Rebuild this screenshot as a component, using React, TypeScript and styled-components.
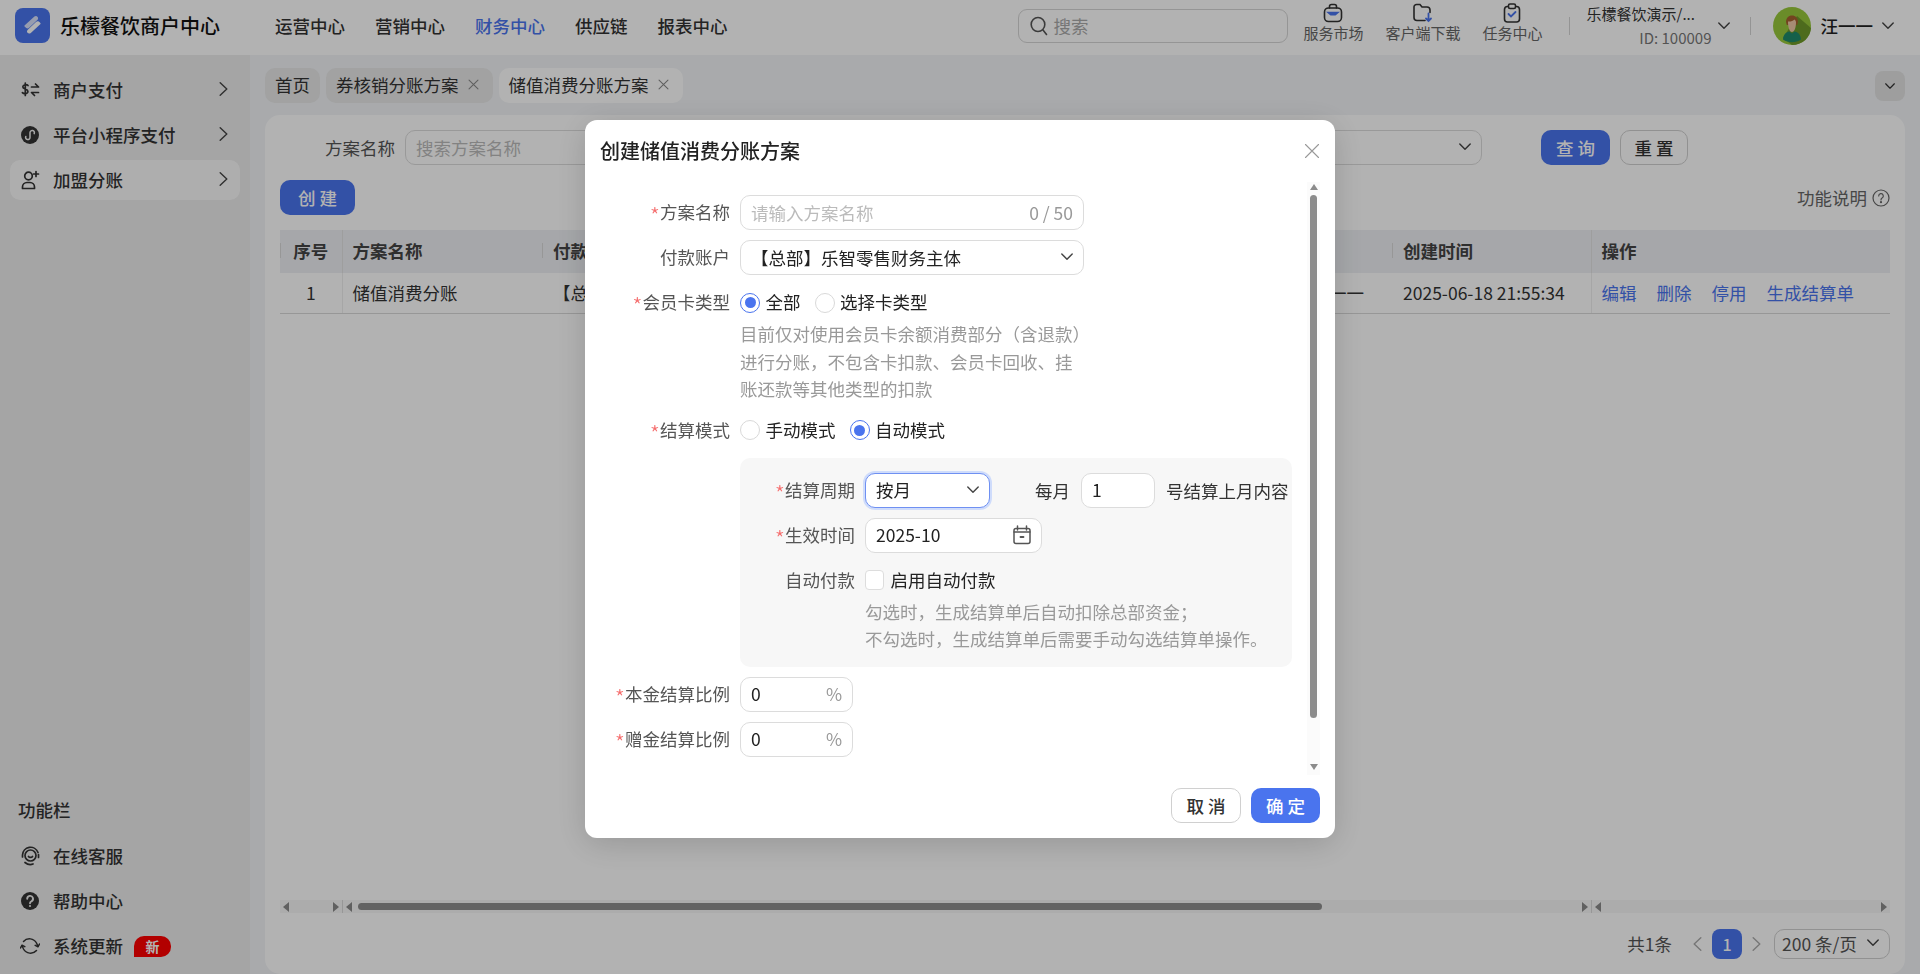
import React from "react";
import styled, { createGlobalStyle } from "styled-components";

const PRIMARY = "#4a74ee";

const GlobalStyle = createGlobalStyle`
  html, body {
    margin: 0;
    height: 100%;
    overflow: hidden;
  }
  body {
    font-family: "Noto Sans CJK SC", "Noto Sans", "Liberation Sans", sans-serif;
    font-size: 17.5px;
    color: #333;
  }
  * {
    box-sizing: border-box;
  }
`;

const Shell = styled.div`
  height: 100vh;
  display: flex;
  flex-direction: column;
  background: #f2f4f7;
`;

/* ---------- top bar ---------- */
const TopBar = styled.header`
  flex: none;
  height: 55px;
  padding: 0 26px 4px 15px;
  display: flex;
  align-items: center;
  background: #fff;
`;
const Brand = styled.div`
  display: flex;
  align-items: center;
  gap: 10px;
  font-size: 20px;
  font-weight: 500;
  color: #111;
  white-space: nowrap;
`;
const Nav = styled.nav`
  display: flex;
  gap: 30px;
  margin-left: 55px;
`;
const NavItem = styled.a<{ $active?: boolean }>`
  font-weight: 500;
  color: ${(p) => (p.$active ? PRIMARY : "#333")};
`;
const SearchBox = styled.div`
  margin-left: auto;
  width: 270px;
  height: 34px;
  padding: 0 11px;
  display: flex;
  align-items: center;
  gap: 5px;
  color: #aaa;
  border: 1px solid #d6d6d6;
  border-radius: 9px;
`;
const Tools = styled.div`
  display: flex;
  align-self: flex-start;
  gap: 22px;
  margin-left: 15px;
  padding-top: 3px;
`;
const Tool = styled.div`
  display: flex;
  flex-direction: column;
  align-items: center;
  font-size: 15px;
  line-height: 20px;
  color: #666;
  white-space: nowrap;
`;
const ToolIcon = styled.svg`
  width: 20px;
  height: 20px;
`;
const BarDivider = styled.div<{ $left: number; $right: number }>`
  width: 1px;
  height: 18px;
  background: #d4d4d4;
  margin: 0 ${(p) => p.$right}px 0 ${(p) => p.$left}px;
`;
const Org = styled.div`
  width: 125px;
  display: flex;
  flex-direction: column;
  font-size: 15px;
  line-height: 24px;
  white-space: nowrap;
`;
const OrgId = styled.span`
  align-self: flex-end;
  color: #777;
`;
const OrgArrow = styled.span`
  margin-left: 6px;
  display: flex;
`;
const UserName = styled.span`
  margin: 0 9px 0 10px;
  font-weight: 500;
  color: #222;
  white-space: nowrap;
`;

/* ---------- sidebar ---------- */
const Body = styled.div`
  flex: 1;
  min-height: 0;
  display: flex;
`;
const Sidebar = styled.aside`
  flex: none;
  width: 250px;
  padding: 15px 10px 8px;
  display: flex;
  flex-direction: column;
  background: #ececec;
`;
const MenuList = styled.div`
  display: flex;
  flex-direction: column;
  gap: 5px;
`;
const MenuItem = styled.div<{ $active?: boolean }>`
  height: 40px;
  padding: 0 12px 2px 10px;
  display: flex;
  align-items: center;
  gap: 13px;
  font-weight: 500;
  color: #333;
  white-space: nowrap;
  border-radius: 10px;
  background: ${(p) => (p.$active ? "#fafafa" : "transparent")};
`;
const MenuIcon = styled.svg`
  flex: none;
  width: 20px;
  height: 20px;
  margin-top: 2px;
`;
const MenuArrow = styled.span`
  margin-left: auto;
  display: flex;
`;
const SidebarFooter = styled.div`
  margin-top: auto;
`;
const FooterTitle = styled.div`
  height: 25px;
  line-height: 23px;
  margin: 0 0 13px 8px;
  font-weight: 500;
  color: #333;
`;
const NewBadge = styled.span`
  width: 37px;
  height: 21px;
  margin: 2px 0 0 -2px;
  display: flex;
  align-items: center;
  justify-content: center;
  font-size: 14px;
  font-weight: 700;
  color: #fff;
  background: #ff0000;
  border-radius: 10px 10px 10px 0;
`;

/* ---------- main content ---------- */
const Content = styled.main`
  flex: 1;
  min-width: 0;
  padding: 13px 15px 0;
  display: flex;
  flex-direction: column;
`;
const TabBar = styled.div`
  flex: none;
  height: 35px;
  margin-bottom: 12px;
  display: flex;
  align-items: center;
  gap: 6px;
`;
const Tab = styled.div<{ $active?: boolean; $closable?: boolean }>`
  height: 35px;
  padding: 0 ${(p) => (p.$closable ? 14 : 10)}px 2px 10px;
  display: flex;
  align-items: center;
  gap: 9px;
  white-space: nowrap;
  color: #333;
  border-radius: 10px;
  background: ${(p) => (p.$active ? "#fff" : "#e8e8e8")};
`;
const CollapseButton = styled.div`
  width: 30px;
  height: 30px;
  margin-left: auto;
  display: flex;
  align-items: center;
  justify-content: center;
  border-radius: 8px;
  background: #e3e3e3;
`;
const Card = styled.section`
  flex: 1;
  min-height: 0;
  padding: 15px 15px 15px;
  display: flex;
  flex-direction: column;
  background: #fff;
  border-radius: 15px;
`;
const FilterRow = styled.div`
  flex: none;
  height: 35px;
  padding: 0 202px 0 45px;
  display: flex;
  align-items: center;
`;
const FilterLabel = styled.span`
  margin-right: 10px;
  color: #555;
  white-space: nowrap;
`;
const FieldBox = styled.div<{ $width: number; $focused?: boolean }>`
  flex: none;
  width: ${(p) => p.$width}px;
  height: 35px;
  padding: 0 10px 1px;
  display: flex;
  align-items: center;
  justify-content: space-between;
  color: #222;
  white-space: nowrap;
  background: #fff;
  border: 1px solid ${(p) => (p.$focused ? "#6f90f2" : "#dcdcdc")};
  border-radius: 10px;
  box-shadow: ${(p) => (p.$focused ? "0 0 0 2px #cfdcfb" : "none")};
`;
const FieldInput = styled.input`
  flex: 1;
  width: 0;
  padding: 0;
  border: 0;
  outline: 0;
  background: transparent;
  font: inherit;
  color: #222;
  &::placeholder {
    color: #bbb;
  }
`;
const FieldHint = styled.span`
  color: #999;
`;
const FilterSelect = styled(FieldBox)`
  margin-left: auto;
`;
const PrimaryButton = styled.button<{ $width: number }>`
  flex: none;
  width: ${(p) => p.$width}px;
  height: 35px;
  padding: 0;
  font: inherit;
  font-weight: 500;
  color: #fff;
  background: ${PRIMARY};
  border: 0;
  border-radius: 10px;
`;
const PlainButton = styled.button<{ $width: number }>`
  flex: none;
  width: ${(p) => p.$width}px;
  height: 35px;
  padding: 0;
  font: inherit;
  font-weight: 500;
  color: #333;
  background: #fff;
  border: 1px solid #d0d0d0;
  border-radius: 10px;
`;
const QueryButton = styled(PrimaryButton)`
  margin-left: 59px;
`;
const ResetButton = styled(PlainButton)`
  margin-left: 10px;
`;
const ActionRow = styled.div`
  flex: none;
  height: 35px;
  margin-top: 15px;
  display: flex;
  align-items: center;
  justify-content: space-between;
`;
const HelpLink = styled.div`
  display: flex;
  align-items: center;
  gap: 5px;
  color: #666;
`;
const Table = styled.table`
  flex: none;
  width: 1610px;
  margin-top: 15px;
  border-collapse: collapse;
  table-layout: fixed;
`;
const Th = styled.th<{ $edge?: boolean; $center?: boolean }>`
  position: relative;
  height: 43px;
  padding: 0 ${(p) => (p.$edge ? 10 : 11)}px 2px;
  text-align: ${(p) => (p.$center ? "center" : "left")};
  font-weight: 700;
  color: #444;
  background: #eef0f4;
  border-left: ${(p) => (p.$edge ? "1px solid #e2e2e2" : "0")};
  &::before {
    content: ${(p) => (p.$edge ? "none" : '""')};
    position: absolute;
    left: 0;
    top: 13px;
    height: 15px;
    width: 1px;
    background: #d8d8d8;
  }
`;
const Td = styled.td<{ $edge?: boolean; $center?: boolean; $right?: boolean }>`
  height: 40px;
  padding: 0 ${(p) => (p.$right ? 28 : p.$edge ? 10 : 11)}px 0 ${(p) => (p.$edge ? 10 : 11)}px;
  text-align: ${(p) => (p.$center ? "center" : p.$right ? "right" : "left")};
  color: #333;
  white-space: nowrap;
  border-bottom: 1px solid #d8d8d8;
  border-left: ${(p) => (p.$edge ? "1px solid #eee" : "0")};
`;
const RowLinks = styled.div`
  display: flex;
  gap: 20px;
`;
const RowLink = styled.a`
  color: ${PRIMARY};
`;
const ScrollBars = styled.div`
  flex: none;
  width: 1610px;
  height: 13px;
  margin-top: auto;
  display: grid;
  grid-template-columns: 62px 1249px 299px;
`;
const ScrollSection = styled.div`
  padding: 0 3px;
  display: flex;
  align-items: center;
  justify-content: space-between;
  background: #f7f7f7;
  & + & {
    border-left: 1px solid #d8d8d8;
  }
`;
const ScrollArrow = styled.span<{ $dir: "left" | "right" }>`
  width: 0;
  height: 0;
  border-top: 5px solid transparent;
  border-bottom: 5px solid transparent;
  ${(p) =>
    p.$dir === "left"
      ? "border-right: 6px solid #8a8a8a;"
      : "border-left: 6px solid #8a8a8a;"}
`;
const ScrollThumb = styled.span`
  width: 964px;
  height: 7px;
  margin: 0 auto 0 6px;
  background: #8f8f8f;
  border-radius: 4px;
`;
const Pagination = styled.div`
  flex: none;
  height: 30px;
  margin-top: 16px;
  padding-bottom: 1px;
  display: flex;
  align-items: center;
  justify-content: flex-end;
  color: #555;
`;
const PageCount = styled.span`
  margin-right: 21px;
`;
const PageCurrent = styled.span`
  width: 30px;
  height: 30px;
  margin: 0 10px;
  display: flex;
  align-items: center;
  justify-content: center;
  font-weight: 500;
  font-size: 16px;
  color: #fff;
  background: ${PRIMARY};
  border-radius: 8px;
`;
const PageSize = styled.div`
  width: 116px;
  height: 30px;
  margin-left: 13px;
  padding: 0 10px 1px 7px;
  display: flex;
  align-items: center;
  justify-content: space-between;
  white-space: nowrap;
  border: 1px solid #d0d0d0;
  border-radius: 10px;
`;

/* ---------- modal ---------- */
const Overlay = styled.div`
  position: fixed;
  inset: 0;
  padding-top: 120px;
  display: flex;
  justify-content: center;
  align-items: flex-start;
  background: rgba(0, 0, 0, 0.3);
`;
const Modal = styled.div`
  width: 750px;
  height: 718px;
  display: flex;
  flex-direction: column;
  background: #fff;
  border-radius: 12px;
  box-shadow: 0 6px 32px rgba(0, 0, 0, 0.16);
`;
const ModalHeader = styled.div`
  flex: none;
  height: 62px;
  padding: 0 15px;
  display: flex;
  align-items: center;
  justify-content: space-between;
`;
const ModalTitle = styled.div`
  margin-bottom: 2px;
  font-size: 20px;
  font-weight: 500;
  color: #222;
`;
const ModalBody = styled.div`
  flex: 1;
  min-height: 0;
  display: flex;
  overflow: hidden;
`;
const Form = styled.div`
  flex: 1;
  min-width: 0;
  padding: 13px 15px 0 0;
  display: flex;
  flex-direction: column;
  gap: 10px;
`;
const FormRow = styled.div`
  display: flex;
  align-items: flex-start;
  gap: 10px;
`;
const FormLabel = styled.label<{ $width?: number }>`
  flex: none;
  width: ${(p) => p.$width ?? 145}px;
  height: 35px;
  line-height: 34px;
  text-align: right;
  color: #555;
  white-space: nowrap;
`;
const Star = styled.span`
  font-size: 23px;
  font-weight: 300;
  line-height: 0;
  vertical-align: -6px;
  color: #f56c6c;
`;
const FormControl = styled.div`
  flex: 1;
  min-width: 0;
`;
const ChoiceRow = styled.div`
  height: 35px;
  display: flex;
  align-items: center;
  color: #222;
`;
const Choice = styled.span`
  margin-right: 14px;
  padding-bottom: 2px;
  display: flex;
  align-items: center;
  gap: 5.5px;
  white-space: nowrap;
`;
const Radio = styled.span<{ $checked?: boolean }>`
  flex: none;
  width: 20px;
  height: 20px;
  margin-top: 2px;
  display: flex;
  align-items: center;
  justify-content: center;
  background: #fff;
  border: 1px solid ${(p) => (p.$checked ? PRIMARY : "#d9d9d9")};
  border-radius: 50%;
  &::after {
    content: "";
    width: 11px;
    height: 11px;
    border-radius: 50%;
    background: ${(p) => (p.$checked ? PRIMARY : "transparent")};
  }
`;
const CheckBox = styled.span`
  flex: none;
  width: 19px;
  height: 20px;
  margin: 2px 1px 0 0;
  background: #fff;
  border: 1px solid #ddd;
  border-radius: 4px;
`;
const HelpText = styled.div`
  line-height: 27.5px;
  color: #999;
  white-space: nowrap;
`;
const SubPanel = styled.div`
  margin-left: 155px;
  padding: 15px 0 14px;
  display: flex;
  flex-direction: column;
  gap: 10px;
  background: #f7f7f7;
  border-radius: 10px;
`;
const InlineFields = styled.div`
  display: flex;
  align-items: center;
  color: #333;
  white-space: nowrap;
`;
const EveryMonth = styled.span`
  margin: 0 11px 0 45px;
`;
const AfterDay = styled.span`
  margin-left: 11px;
`;
const ScrollColumn = styled.div`
  flex: none;
  width: 13px;
  margin-right: 15px;
  padding: 2px 0 5px;
  display: flex;
  flex-direction: column;
  align-items: center;
  background: #fbfbfb;
`;
const VArrow = styled.span<{ $dir: "up" | "down" }>`
  flex: none;
  width: 0;
  height: 0;
  border-left: 4px solid transparent;
  border-right: 4px solid transparent;
  ${(p) =>
    p.$dir === "up"
      ? "border-bottom: 6px solid #8b8b8b;"
      : "border-top: 6px solid #8b8b8b; margin-top: auto;"}
`;
const VThumb = styled.span`
  flex: none;
  width: 7px;
  height: 523px;
  margin-top: 5px;
  background: #8b8b8b;
  border-radius: 4px;
`;
const ModalFooter = styled.div`
  flex: none;
  height: 63px;
  padding: 13px 15px 0;
  display: flex;
  justify-content: flex-end;
  gap: 10px;
`;

/* ---------- drawings ---------- */
type ChevronProps = { dir?: "right" | "down" | "left"; color?: string; size?: number };
const Chevron: React.FC<ChevronProps> = ({ dir = "down", color = "#444", size = 12 }) => {
  if (dir === "down") {
    return (
      <svg width={size} height={size * 0.6} viewBox="0 0 12 7" fill="none">
        <path d="M.8.8 6 6.2 11.2.8" stroke={color} strokeWidth="1.4" strokeLinecap="round" strokeLinejoin="round" />
      </svg>
    );
  }
  return (
    <svg width="9" height="14" viewBox="0 0 9 14" fill="none">
      <path
        d={dir === "right" ? "M1.2.8 7.8 7l-6.6 6.2" : "M7.8.8 1.2 7l6.6 6.2"}
        stroke={color}
        strokeWidth="1.4"
        strokeLinecap="round"
        strokeLinejoin="round"
      />
    </svg>
  );
};

const CloseMark: React.FC<{ size?: number; color?: string }> = ({ size = 11, color = "#888" }) => (
  <svg width={size} height={size} viewBox="0 0 16 16" fill="none">
    <path d="M1.5 1.5l13 13M14.5 1.5l-13 13" stroke={color} strokeWidth={size > 12 ? 1.1 : 1.5} strokeLinecap="round" />
  </svg>
);

const Logo = () => (
  <svg width="35" height="35" viewBox="0 0 35 35">
    <rect width="35" height="35" rx="8" fill={PRIMARY} />
    <path d="M9.500 17.600 19.400 8.600c1-.9 2.500-.7 3.200.3.800 1 .6 2.200-.3 3.100l-7.900 7.500c-1 .9-2.200 1.300-3.200.5-1-.8-2.300-1.700-1.700-2.400z" fill="#d8e1fb" />
    <path d="M25.500 16.100 15.800 25c-1 .9-2.500.8-3.300-.2-.8-1-.6-2.300.3-3.100l7.900-7.500c1-.9 2.300-1.200 3.300-.4.900.7 2.100 1.600 1.500 2.300z" fill="#fff" />
  </svg>
);

const Avatar = () => (
  <svg width="38" height="38" viewBox="0 0 38 38">
    <circle cx="19" cy="19" r="19" fill="#98c93c" />
    <path d="M24 9l14 12c-.5 9-8 17-19 17l-9-7z" fill="#6f9a2a" />
    <path d="M10 32.500c.3-5 3-7.500 6.500-8l2.500 2 2.500-2c3.500.5 6.200 3 6.500 8-2.600 1.800-5.800 2.800-9 2.800s-6.400-1-9-2.800z" fill="#1f8a6b" />
    <path d="M13 15c0-4 2.500-6.500 6-6.500s6 2.500 6 6.500l-.8 3H13.800z" fill="#a5622f" />
    <path d="M15 14.500c2 .3 5.500-.5 6.500-2 .8.800 1.500 1.500 1.500 3 0 5-1.500 9.500-4 9.500s-4-4.500-4-10.500z" fill="#eec9a6" />
  </svg>
);

const MagnifierIcon = () => (
  <svg width="18" height="20" viewBox="0 0 18 20" fill="none" stroke="#555" strokeWidth="1.6" strokeLinecap="round">
    <ellipse cx="8" cy="8.500" rx="6.800" ry="7" />
    <path d="M13 14l3.500 4.500" />
  </svg>
);

const QuestionCircle = () => (
  <svg width="18" height="18" viewBox="0 0 18 18" fill="none" stroke="#666" strokeWidth="1.2" strokeLinecap="round">
    <circle cx="9" cy="9" r="8" />
    <path d="M6.700 7a2.300 2.300 0 1 1 3.400 2c-.8.500-1.100 1-1.100 1.900" />
    <circle cx="9" cy="13.200" r=".5" fill="#666" />
  </svg>
);

const CalendarIcon = () => (
  <svg width="18" height="20" viewBox="0 0 18 20" fill="none" stroke="#555" strokeWidth="1.5" strokeLinecap="round">
    <rect x="1" y="3.500" width="16" height="15" rx="2" />
    <path d="M4.500 1v4M13.500 1v4M1 7h16" />
    <path d="M7.500 12h3" strokeWidth="1.800" />
  </svg>
);

const App: React.FC = () => {
  return (
    <>
      <GlobalStyle />
      <Shell>
        <TopBar>
          <Brand>
            <Logo />
            乐檬餐饮商户中心
          </Brand>
          <Nav>
            <NavItem>运营中心</NavItem>
            <NavItem>营销中心</NavItem>
            <NavItem $active>财务中心</NavItem>
            <NavItem>供应链</NavItem>
            <NavItem>报表中心</NavItem>
          </Nav>
          <SearchBox>
            <MagnifierIcon />
            搜索
          </SearchBox>
          <Tools>
            <Tool>
              <ToolIcon viewBox="0 0 20 20" fill="none" stroke="#333" strokeWidth="1.600" strokeLinecap="round">
                <rect x="1.500" y="5" width="17" height="13.500" rx="4" />
                <path d="M6.500 5V3.500a2 2 0 0 1 2-2h3a2 2 0 0 1 2 2V5" />
                <path d="M3 8.800h14l-4.500 3.700h-5z" fill={PRIMARY} stroke="none" />
              </ToolIcon>
              服务市场
            </Tool>
            <Tool>
              <ToolIcon viewBox="0 0 20 20" fill="none" stroke="#333" strokeWidth="1.600" strokeLinecap="round">
                <path d="M12 17.500H4a3 3 0 0 1-3-3V4a2.500 2.500 0 0 1 2.500-2.500H7l2 2.500h5a3 3 0 0 1 3 3v2.500" />
                <path d="M15.500 10.500v7.500M13 15.500l2.500 2.500 2.500-2.500" stroke={PRIMARY} strokeWidth="1.800" />
              </ToolIcon>
              客户端下载
            </Tool>
            <Tool>
              <ToolIcon viewBox="0 0 20 20" fill="none" stroke="#333" strokeWidth="1.600" strokeLinecap="round">
                <rect x="2.500" y="3.500" width="15" height="15.500" rx="3" />
                <rect x="6.500" y="1" width="7" height="4.500" rx="1.500" fill="#fff" />
                <path d="M6.500 11l2.500 2.500 4.500-4.500" stroke={PRIMARY} strokeWidth="1.800" />
              </ToolIcon>
              任务中心
            </Tool>
          </Tools>
          <BarDivider $left={26} $right={17} />
          <Org>
            乐檬餐饮演示/...
            <OrgId>ID: 100009</OrgId>
          </Org>
          <OrgArrow>
            <Chevron />
          </OrgArrow>
          <BarDivider $left={20} $right={22} />
          <Avatar />
          <UserName>汪一一</UserName>
          <Chevron />
        </TopBar>
        <Body>
          <Sidebar>
            <MenuList>
              <MenuItem>
                <MenuIcon viewBox="0 0 20 20" fill="none" stroke="#333" strokeWidth="1.700" strokeLinecap="round" strokeLinejoin="round">
                  <path d="M8 5.500C7 4.300 3 4.200 2.800 6.800c-.2 2.700 5 1.700 5.100 4.600.1 2.700-4.200 2.700-5.500 1.200M5.300 3v12.500" />
                  <path d="M11.500 7h7l-3-3M18.500 12.500h-7l3 3" />
                </MenuIcon>
                商户支付
                <MenuArrow>
                  <Chevron dir="right" />
                </MenuArrow>
              </MenuItem>
              <MenuItem>
                <MenuIcon viewBox="0 0 20 20" fill="none">
                  <circle cx="10" cy="10" r="9" fill="#333" />
                  <path d="M5.800 11.500a2.200 2.200 0 1 0 4.200.9V7.700a2.200 2.200 0 1 1 4.200.9" stroke="#f0f0f0" strokeWidth="1.500" strokeLinecap="round" />
                </MenuIcon>
                平台小程序支付
                <MenuArrow>
                  <Chevron dir="right" />
                </MenuArrow>
              </MenuItem>
              <MenuItem $active>
                <MenuIcon viewBox="0 0 20 20" fill="none" stroke="#333" strokeWidth="1.700" strokeLinecap="round">
                  <circle cx="8.500" cy="6" r="3.800" />
                  <path d="M2.500 18.500v-1.500a4.500 4.500 0 0 1 4.500-4.500h3a4.500 4.500 0 0 1 4.500 4.500v1.500z" strokeLinejoin="round" />
                  <path d="M16 1.500v5M13.500 4h5" />
                </MenuIcon>
                加盟分账
                <MenuArrow>
                  <Chevron dir="right" />
                </MenuArrow>
              </MenuItem>
            </MenuList>
            <SidebarFooter>
              <FooterTitle>功能栏</FooterTitle>
              <MenuList>
                <MenuItem>
                  <MenuIcon viewBox="0 0 20 20" fill="none" stroke="#333" strokeWidth="1.700" strokeLinecap="round">
                    <circle cx="10.500" cy="9.500" r="5.500" />
                    <path d="M8.500 10.500c.8 1.200 3.200 1.200 4 0" />
                    <path d="M2.500 11V9a8 8 0 0 1 15.500-2.500M18.500 8.500v3M5 16.500c2.500 2 6 2.300 8 1.500" />
                  </MenuIcon>
                  在线客服
                </MenuItem>
                <MenuItem>
                  <MenuIcon viewBox="0 0 20 20" fill="none">
                    <circle cx="10" cy="10" r="9" fill="#333" />
                    <path d="M7.200 7.800a2.900 2.900 0 1 1 4.300 2.500c-1 .6-1.500 1.100-1.500 2" stroke="#ececec" strokeWidth="1.900" strokeLinecap="round" />
                    <circle cx="10" cy="15" r="1.100" fill="#ececec" />
                  </MenuIcon>
                  帮助中心
                </MenuItem>
                <MenuItem>
                  <MenuIcon viewBox="0 0 20 20" fill="none" stroke="#333" strokeWidth="1.500" strokeLinecap="round" strokeLinejoin="round">
                    <path d="M3.500 5.500A8 8 0 0 1 16.500 7l1.500 3.500" />
                    <path d="M16.500 14.500A8 8 0 0 1 3.500 13L2 9.500" />
                    <path d="M19.500 8l-1.500 2.700-2.800-1.300M.5 12l1.500-2.700 2.800 1.300" />
                  </MenuIcon>
                  系统更新
                  <NewBadge>新</NewBadge>
                </MenuItem>
              </MenuList>
            </SidebarFooter>
          </Sidebar>
          <Content>
            <TabBar>
              <Tab>首页</Tab>
              <Tab $closable>
                券核销分账方案
                <CloseMark />
              </Tab>
              <Tab $active $closable>
                储值消费分账方案
                <CloseMark />
              </Tab>
              <CollapseButton>
                <Chevron size={10} color="#333" />
              </CollapseButton>
            </TabBar>
            <Card>
              <FilterRow>
                <FilterLabel>方案名称</FilterLabel>
                <FieldBox $width={300}>
                  <FieldInput placeholder="搜索方案名称" readOnly />
                </FieldBox>
                <FilterSelect $width={300}>
                  <span />
                  <Chevron />
                </FilterSelect>
                <QueryButton $width={69}>查 询</QueryButton>
                <ResetButton $width={68}>重 置</ResetButton>
              </FilterRow>
              <ActionRow>
                <PrimaryButton $width={75}>创 建</PrimaryButton>
                <HelpLink>
                  功能说明
                  <QuestionCircle />
                </HelpLink>
              </ActionRow>
              <Table>
                <colgroup>
                  <col width={62} />
                  <col width={200} />
                  <col width={658} />
                  <col width={192} />
                  <col width={199} />
                  <col width={299} />
                </colgroup>
                <thead>
                  <tr>
                    <Th $center>序号</Th>
                    <Th $edge>方案名称</Th>
                    <Th>付款</Th>
                    <Th />
                    <Th>创建时间</Th>
                    <Th $edge>操作</Th>
                  </tr>
                </thead>
                <tbody>
                  <tr>
                    <Td $center>1</Td>
                    <Td $edge>储值消费分账</Td>
                    <Td>【总</Td>
                    <Td $right>汪一一</Td>
                    <Td>2025-06-18 21:55:34</Td>
                    <Td $edge>
                      <RowLinks>
                        <RowLink>编辑</RowLink>
                        <RowLink>删除</RowLink>
                        <RowLink>停用</RowLink>
                        <RowLink>生成结算单</RowLink>
                      </RowLinks>
                    </Td>
                  </tr>
                </tbody>
              </Table>
              <ScrollBars>
                <ScrollSection>
                  <ScrollArrow $dir="left" />
                  <ScrollArrow $dir="right" />
                </ScrollSection>
                <ScrollSection>
                  <ScrollArrow $dir="left" />
                  <ScrollThumb />
                  <ScrollArrow $dir="right" />
                </ScrollSection>
                <ScrollSection>
                  <ScrollArrow $dir="left" />
                  <ScrollArrow $dir="right" />
                </ScrollSection>
              </ScrollBars>
              <Pagination>
                <PageCount>共1条</PageCount>
                <Chevron dir="left" color="#aaa" />
                <PageCurrent>1</PageCurrent>
                <Chevron dir="right" color="#aaa" />
                <PageSize>
                  200 条/页
                  <Chevron />
                </PageSize>
              </Pagination>
            </Card>
          </Content>
        </Body>
      </Shell>
      <Overlay>
        <Modal>
          <ModalHeader>
            <ModalTitle>创建储值消费分账方案</ModalTitle>
            <CloseMark size={16} color="#999" />
          </ModalHeader>
          <ModalBody>
            <Form>
              <FormRow>
                <FormLabel>
                  <Star>*</Star>方案名称
                </FormLabel>
                <FieldBox $width={344}>
                  <FieldInput placeholder="请输入方案名称" readOnly />
                  <FieldHint>0 / 50</FieldHint>
                </FieldBox>
              </FormRow>
              <FormRow>
                <FormLabel>付款账户</FormLabel>
                <FieldBox $width={344}>
                  <span>【总部】乐智零售财务主体</span>
                  <Chevron />
                </FieldBox>
              </FormRow>
              <FormRow>
                <FormLabel>
                  <Star>*</Star>会员卡类型
                </FormLabel>
                <FormControl>
                  <ChoiceRow>
                    <Choice>
                      <Radio $checked />
                      全部
                    </Choice>
                    <Choice>
                      <Radio />
                      选择卡类型
                    </Choice>
                  </ChoiceRow>
                  <HelpText>
                    目前仅对使用会员卡余额消费部分（含退款）
                    <br />
                    进行分账，不包含卡扣款、会员卡回收、挂
                    <br />
                    账还款等其他类型的扣款
                  </HelpText>
                </FormControl>
              </FormRow>
              <FormRow>
                <FormLabel>
                  <Star>*</Star>结算模式
                </FormLabel>
                <ChoiceRow>
                  <Choice>
                    <Radio />
                    手动模式
                  </Choice>
                  <Choice>
                    <Radio $checked />
                    自动模式
                  </Choice>
                </ChoiceRow>
              </FormRow>
              <SubPanel>
                <FormRow>
                  <FormLabel $width={115}>
                    <Star>*</Star>结算周期
                  </FormLabel>
                  <InlineFields>
                    <FieldBox $width={125} $focused>
                      按月
                      <Chevron />
                    </FieldBox>
                    <EveryMonth>每月</EveryMonth>
                    <FieldBox $width={74}>1</FieldBox>
                    <AfterDay>号结算上月内容</AfterDay>
                  </InlineFields>
                </FormRow>
                <FormRow>
                  <FormLabel $width={115}>
                    <Star>*</Star>生效时间
                  </FormLabel>
                  <FieldBox $width={177}>
                    2025-10
                    <CalendarIcon />
                  </FieldBox>
                </FormRow>
                <FormRow>
                  <FormLabel $width={115}>自动付款</FormLabel>
                  <FormControl>
                    <ChoiceRow>
                      <Choice>
                        <CheckBox />
                        启用自动付款
                      </Choice>
                    </ChoiceRow>
                    <HelpText>
                      勾选时，生成结算单后自动扣除总部资金；
                      <br />
                      不勾选时，生成结算单后需要手动勾选结算单操作。
                    </HelpText>
                  </FormControl>
                </FormRow>
              </SubPanel>
              <FormRow>
                <FormLabel>
                  <Star>*</Star>本金结算比例
                </FormLabel>
                <FieldBox $width={113}>
                  0<FieldHint>%</FieldHint>
                </FieldBox>
              </FormRow>
              <FormRow>
                <FormLabel>
                  <Star>*</Star>赠金结算比例
                </FormLabel>
                <FieldBox $width={113}>
                  0<FieldHint>%</FieldHint>
                </FieldBox>
              </FormRow>
            </Form>
            <ScrollColumn>
              <VArrow $dir="up" />
              <VThumb />
              <VArrow $dir="down" />
            </ScrollColumn>
          </ModalBody>
          <ModalFooter>
            <PlainButton $width={70}>取 消</PlainButton>
            <PrimaryButton $width={69}>确 定</PrimaryButton>
          </ModalFooter>
        </Modal>
      </Overlay>
    </>
  );
};

export default App;
